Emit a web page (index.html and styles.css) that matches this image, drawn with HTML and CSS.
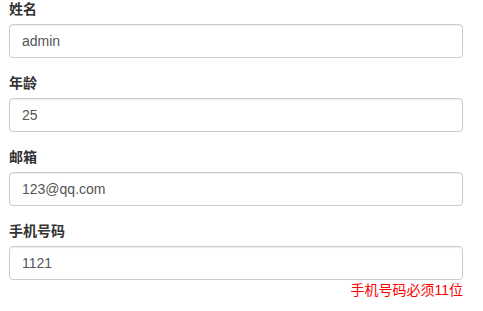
FILE: index.html
```html
<!DOCTYPE html>
<html lang="zh">
<head>
<meta charset="utf-8">
<link rel="stylesheet" href="styles.css">
</head>
<body>
<form class="form">
  <div class="form-group">
    <label class="label">姓名</label>
    <input class="form-control" type="text" value="admin">
  </div>
  <div class="form-group">
    <label class="label">年龄</label>
    <input class="form-control" type="text" value="25">
  </div>
  <div class="form-group">
    <label class="label">邮箱</label>
    <input class="form-control" type="text" value="123@qq.com">
  </div>
  <div class="form-group">
    <label class="label">手机号码</label>
    <input class="form-control" type="text" value="1121">
    <div class="error">手机号码必须11位</div>
  </div>
</form>
</body>
</html>
```
FILE: styles.css
```css
html, body {
  margin: 0;
  padding: 0;
  background: #fff;
}
body {
  font-family: "Liberation Sans", "Noto Sans CJK SC", sans-serif;
  font-size: 14px;
  line-height: 20px;
  color: #333;
}
.form {
  width: 454px;
  margin: -1px 0 0 9px;
}
.form-group {
  margin-bottom: 15px;
}
.label {
  display: inline-block;
  margin-bottom: 5px;
  font-weight: bold;
  line-height: 20px;
}
.form-control {
  display: block;
  box-sizing: border-box;
  width: 100%;
  height: 34px;
  margin: 0;
  padding: 6px 12px;
  font-family: "Liberation Sans", "Noto Sans CJK SC", sans-serif;
  font-size: 14px;
  line-height: 20px;
  color: #555;
  background: #fff;
  border: 1px solid #ccc;
  border-radius: 4px;
  box-shadow: inset 0 1px 1px rgba(0,0,0,.075);
  outline: none;
}
.error {
  text-align: right;
  color: #f00;
  line-height: 20px;
}
```
